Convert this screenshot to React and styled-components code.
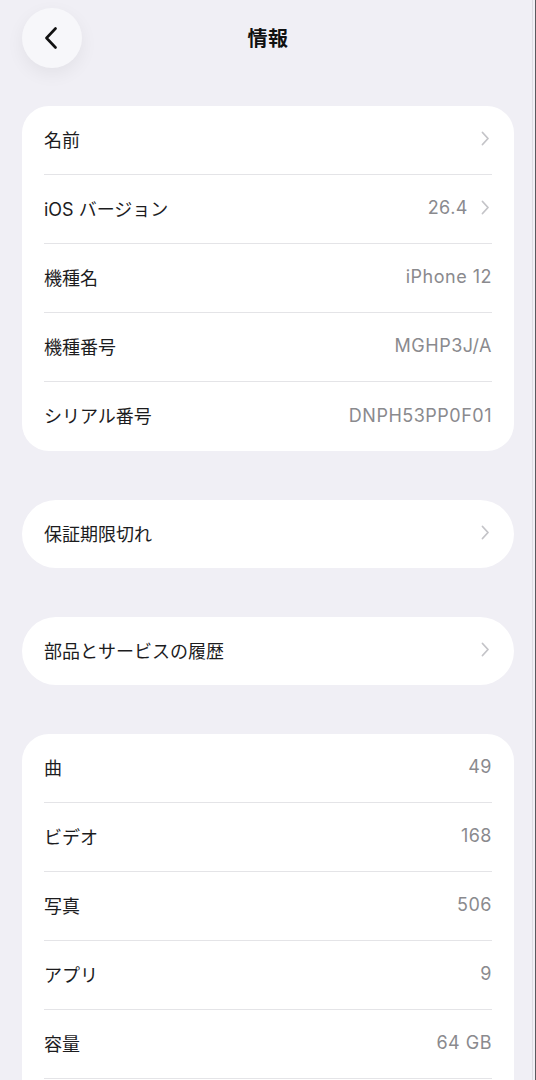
import React from "react";
import styled, { createGlobalStyle } from "styled-components";

const GlobalStyle = createGlobalStyle`
  html, body {
    margin: 0;
    padding: 0;
    background: #f0eff5;
  }
  body {
    font-family: Inter, "Noto Sans CJK JP", "Noto Sans", sans-serif;
    -webkit-font-smoothing: antialiased;
  }
`;

const deviceRows = [
  { label: "名前", value: "", link: true },
  { label: "iOS バージョン", value: "26.4", link: true },
  { label: "機種名", value: "iPhone 12" },
  { label: "機種番号", value: "MGHP3J/A" },
  { label: "シリアル番号", value: "DNPH53PP0F01" },
];

const mediaRows = [
  { label: "曲", value: "49" },
  { label: "ビデオ", value: "168" },
  { label: "写真", value: "506" },
  { label: "アプリ", value: "9" },
  { label: "容量", value: "64 GB" },
];

function Chevron() {
  return (
    <svg width="9" height="15" viewBox="0 0 9 15" fill="none">
      <path
        d="M1.5 1.5L7 7.5L1.5 13.5"
        stroke="#c4c4c8"
        strokeWidth="1.8"
        strokeLinecap="round"
        strokeLinejoin="round"
      />
    </svg>
  );
}

function Row({ label, value, link, short }) {
  return (
    <RowWrap short={short}>
      <Label>{label}</Label>
      <Right link={link}>
        {value && <Value>{value}</Value>}
        {link && <Chevron />}
      </Right>
    </RowWrap>
  );
}

export default function App() {
  return (
    <>
      <GlobalStyle />
      <Page>
        <Header>
          <BackButton aria-label="戻る">
            <svg width="14" height="22" viewBox="0 0 14 22" fill="none">
              <path
                d="M11.5 1.5L2.5 11L11.5 20.5"
                stroke="#111"
                strokeWidth="2.6"
                strokeLinecap="round"
                strokeLinejoin="round"
              />
            </svg>
          </BackButton>
          <Title>情報</Title>
        </Header>

        <Sections>
          <Card>
            {deviceRows.map((r) => (
              <Row key={r.label} {...r} />
            ))}
          </Card>

          <Card pill>
            <Row label="保証期限切れ" link short />
          </Card>

          <Card pill>
            <Row label="部品とサービスの履歴" link short />
          </Card>

          <Card>
            {mediaRows.map((r) => (
              <Row key={r.label} {...r} />
            ))}
            <Continues />
          </Card>
        </Sections>
      </Page>
    </>
  );
}

const Page = styled.div`
  width: 536px;
  height: 1080px;
  overflow: hidden;
  box-sizing: border-box;
  padding: 8px 22px 0;
  box-shadow: inset -1px 0 0 #5a5a5e, inset -3px 0 0 #f0eff5,
    inset -4px 0 0 #dcdce2;
`;

const Header = styled.div`
  position: relative;
  height: 60px;
  display: flex;
  align-items: center;
  justify-content: center;
`;

const BackButton = styled.button`
  position: absolute;
  left: 0;
  top: 0;
  width: 60px;
  height: 60px;
  border: none;
  border-radius: 50%;
  background: #f7f7fa;
  box-shadow: 0 6px 18px rgba(0, 0, 0, 0.06);
  display: flex;
  align-items: center;
  justify-content: center;
  padding: 0 3px 0 0;
`;

const Title = styled.h1`
  margin: 0 0 2px;
  font-size: 20px;
  font-weight: 700;
  color: #111;
  letter-spacing: 0.5px;
`;

const Sections = styled.div`
  margin-top: 38px;
  display: flex;
  flex-direction: column;
  gap: 49px;
`;

const Card = styled.div`
  background: #fff;
  border-radius: ${(p) => (p.pill ? "34px" : "27px")};
  padding: 0 22px;
`;

const RowWrap = styled.div`
  height: ${(p) => (p.short ? "68px" : "69px")};
  box-sizing: border-box;
  padding-bottom: 3px;
  display: flex;
  align-items: center;
  justify-content: space-between;
  border-bottom: 1.5px solid #e4e4e7;

  ${Card} > &:last-child {
    border-bottom: none;
  }
`;

const Continues = styled.div`
  height: 40px;
`;

const Label = styled.span`
  font-size: 18px;
  color: #1c1c1e;
`;

const Right = styled.div`
  display: flex;
  align-items: center;
  gap: 13px;
  margin-right: ${(p) => (p.link ? "2px" : "0")};
`;

const Value = styled.span`
  font-size: 18px;
  letter-spacing: 0.5px;
  color: #8a8a8e;
`;
